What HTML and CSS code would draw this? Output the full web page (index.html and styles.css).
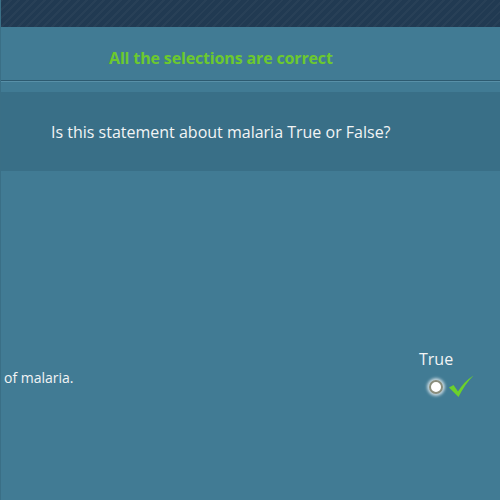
FILE: index.html
```html
<!DOCTYPE html>
<html>
<head>
<meta charset="utf-8">
<link rel="stylesheet" href="styles.css">
</head>
<body>
<div class="page">
  <div class="topbar"></div>
  <div class="feedback">All the selections are correct</div>
  <div class="divider"></div>
  <div class="question">Is this statement about malaria True or False?</div>
  <div class="body">
    <div class="statement">of malaria.</div>
    <div class="option">
      <div class="label">True</div>
      <div class="choice">
        <span class="radio"></span>
        <svg class="check" width="26" height="23" viewBox="0 0 26 23">
          <path d="M1 12.5 L5.5 10 L10 16.5 Q16 6.5 25.5 0.5 Q17 9 10.5 22 Z" fill="#6cd12a"/>
        </svg>
      </div>
    </div>
  </div>
</div>
</body>
</html>
```
FILE: styles.css
```css
html, body {
  margin: 0;
  padding: 0;
}
body {
  background: #417b94;
  font-family: "Open Sans", "Noto Sans", sans-serif;
  width: 500px;
  height: 500px;
  overflow: hidden;
}
.page {
  border-left: 1px solid #3a6f86;
  height: 500px;
}
.topbar {
  height: 27px;
  background-color: #213a52;
  background-image: repeating-linear-gradient(135deg, rgba(255,255,255,0.03) 0 2px, transparent 2px 6px);
}
.feedback {
  height: 53px;
  box-sizing: border-box;
  padding-top: 8px;
  display: flex;
  align-items: center;
  padding-left: 108px;
  color: #6cc92e;
  font-weight: 700;
  font-size: 16px;
  letter-spacing: -0.15px;
}
.divider {
  height: 1px;
  background: #2d5a70;
  border-bottom: 1px solid #5890a8;
  margin-bottom: 10px;
}
.question {
  height: 79px;
  background: #396f87;
  display: flex;
  align-items: center;
  padding-left: 50px;
  color: #f2f4f5;
  font-size: 16px;
}
.body {
  display: flex;
  justify-content: space-between;
  align-items: flex-start;
  padding-top: 176px;
}
.statement {
  color: #f2f4f5;
  font-size: 14px;
  margin-top: 21px;
  padding-left: 3px;
}
.option {
  display: flex;
  flex-direction: column;
  align-items: flex-start;
  margin-right: 26px;
}
.label {
  color: #f2f4f5;
  font-size: 16px;
  margin-top: 1px;
}
.choice {
  display: flex;
  align-items: center;
  gap: 5px;
  margin-top: 5px;
}
.radio {
  width: 10px;
  height: 10px;
  border-radius: 50%;
  background: #fff;
  border: 2px solid #8a8d7c;
  box-shadow: 0 0 3px 2px rgba(255,255,255,0.7);
  margin-left: 10px;
}
.check {
  display: block;
}
```
